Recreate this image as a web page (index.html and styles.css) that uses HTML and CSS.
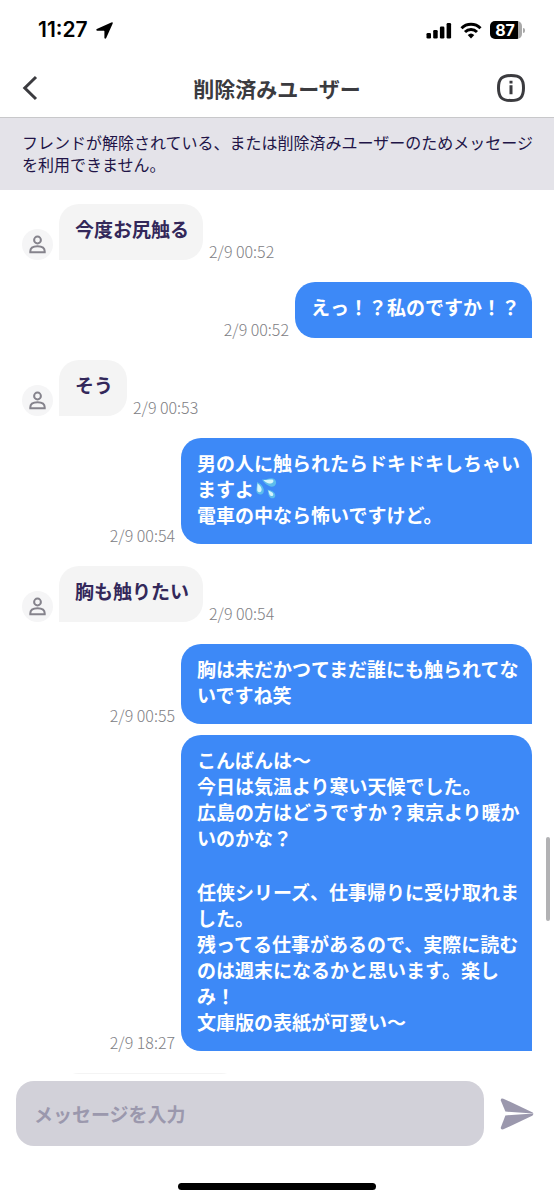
FILE: index.html
```html
<!DOCTYPE html>
<html lang="ja">
<head>
<meta charset="utf-8">
<meta name="viewport" content="width=device-width, initial-scale=1">
<title>削除済みユーザー</title>
<link rel="stylesheet" href="styles.css">
</head>
<body>
<svg class="defs" aria-hidden="true">
  <symbol id="person" viewBox="0 0 31 31">
    <circle cx="15.500" cy="11" r="3.400"/>
    <path d="M8.300 23.300v-1c0-3.200 3-5 7.200-5s7.200 1.800 7.200 5v1z"/>
  </symbol>
</svg>
<div class="app">
  <div class="status">
    <div class="status-group">
      <span class="clock">11:27</span>
      <svg width="17" height="17" viewBox="0 0 17 17" aria-hidden="true"><path d="M15.300 0.400Q17.300 -0.300 16.600 1.700L10.200 16Q9.300 17.400 8.400 16V9.200Q8.400 8.700 7.900 8.700H1Q-0.400 8 0.800 7Z"/></svg>
    </div>
    <div class="status-group">
      <svg width="26" height="17" viewBox="0 0 26 17" aria-hidden="true"><rect x="0.500" y="11" width="4.500" height="5.500" rx="1.300"/><rect x="7.200" y="8" width="4.500" height="8.500" rx="1.300"/><rect x="13.900" y="4.500" width="4.500" height="12" rx="1.300"/><rect x="20.600" y="1" width="4.500" height="15.500" rx="1.300"/></svg>
      <svg class="wifi" width="22" height="17" viewBox="0 0 22 17" aria-hidden="true"><path d="M1.500 6.200a13.500 13.500 0 0 1 19 0M5 10a8.600 8.600 0 0 1 12 0" /><path class="solid" d="M11 16.500l-3.300-3.400a4.800 4.800 0 0 1 6.600 0z"/></svg>
      <div class="battery"><span class="battery-body">87</span><span class="battery-cap"></span></div>
    </div>
  </div>
  <header class="header">
    <button class="icon-button back" type="button" aria-label="戻る"><svg width="16" height="26" viewBox="0 0 16 26"><path d="M14 2L2.800 13L14 24"/></svg></button>
    <h1 class="title">削除済みユーザー</h1>
    <button class="icon-button info" type="button" aria-label="情報"><svg width="28" height="28" viewBox="0 0 28 28"><path d="M14 1.500C23.200 1.500 26.500 4.800 26.500 14S23.200 26.500 14 26.500S1.500 23.200 1.500 14S4.800 1.500 14 1.500Z"/><path d="M14 11.300V20.300M14 6.700V9.400"/></svg></button>
  </header>
  <p class="notice">フレンドが解除されている、または削除済みユーザーのためメッセージを利用できません。</p>
  <main class="chat">
    <div class="row in">
      <svg class="avatar"><use href="#person"/></svg>
      <div class="bubble"><p>今度お尻触る</p></div>
      <time>2/9 00:52</time>
    </div>
    <div class="row out">
      <div class="bubble"><p>えっ！？私のですか！？</p></div>
      <time>2/9 00:52</time>
    </div>
    <div class="row in">
      <svg class="avatar"><use href="#person"/></svg>
      <div class="bubble"><p>そう</p></div>
      <time>2/9 00:53</time>
    </div>
    <div class="row out">
      <div class="bubble"><p>男の人に触られたらドキドキしちゃいますよ<svg class="emoji" viewBox="0 0 22 22" role="img" aria-label="汗"><g fill="#5dbdec"><path d="M2 5C7 7 10 12 8.500 15.500C7 19 1.500 18 1.300 13.500C1.200 10.500 2.500 8 2 5Z"/><path d="M7 2.500C11 3 13 1 17 1.200C21.500 1.500 22.500 7 19 9.200C15 11 10 7 7 2.500Z"/><path d="M12.500 12.500C16 13.500 20.500 15 20.300 18.700C20 21.800 16 22.300 14.300 19.500C13 17.500 13.500 15 12.500 12.500Z"/></g><g fill="#d4f5fc"><path d="M2.500 6.500C6.500 9.500 7.500 12.500 6 14.500C4.500 16 2 15 2.200 12.500Z"/><path d="M8.500 3.100C13 3.300 15 1.800 18 2.800C19.500 5 17 7 14 6.500C12 6 10 4.800 8.500 3.100Z"/><path d="M13.300 13.500C16.500 14.700 18.800 16 18.200 18.200C17 19.700 15 19 14.500 17.500Z"/></g></svg><br>電車の中なら怖いですけど。</p></div>
      <time>2/9 00:54</time>
    </div>
    <div class="row in">
      <svg class="avatar"><use href="#person"/></svg>
      <div class="bubble"><p>胸も触りたい</p></div>
      <time>2/9 00:54</time>
    </div>
    <div class="thread">
      <div class="row out">
        <div class="bubble"><p>胸は未だかつてまだ誰にも触られてないですね笑</p></div>
        <time>2/9 00:55</time>
      </div>
      <div class="row out">
        <div class="bubble">
          <p>こんばんは〜<br>今日は気温より寒い天候でした。<br>広島の方はどうですか？東京より暖かいのかな？</p>
          <p>任侠シリーズ、仕事帰りに受け取れました。<br>残ってる仕事があるので、実際に読むのは週末になるかと思います。楽しみ！<br>文庫版の表紙が可愛い〜</p>
        </div>
        <time>2/9 18:27</time>
      </div>
    </div>
    <div class="row in" aria-hidden="true">
      <div class="bubble next"></div>
    </div>
    <div class="scrollbar"></div>
  </main>
  <form class="composer">
    <input class="field" type="text" aria-label="メッセージ" placeholder="メッセージを入力">
    <button class="icon-button send" type="button" aria-label="送信"><svg width="34" height="32" viewBox="0 0 34 32"><path d="M3.400 0.700L32.200 14.200Q33.500 15 33.200 15.400L5.400 13.600L0.800 2.600Q0.400 0 3.400 0.700Z"/><path d="M3.400 31.300L32.200 17.800Q33.500 17 33.200 15.400L5.400 17.400L0.800 29.400Q0.400 32 3.400 31.300Z"/></svg></button>
  </form>
  <div class="home"></div>
</div>
</body>
</html>
```
FILE: styles.css
```css
* { box-sizing: border-box; }

body {
  margin: 0;
  background: #fff;
  font-family: "Noto Sans CJK JP", sans-serif;
}

h1, p { margin: 0; }

.defs { display: none; }

.app {
  display: flex;
  flex-direction: column;
  height: 100vh;
}

.status {
  display: flex;
  justify-content: space-between;
  align-items: center;
  height: 60px;
  padding: 0 29px 0 38px;
}

.status-group {
  display: flex;
  align-items: center;
  gap: 8px;
}

.clock {
  font: 600 21px/24px Inter, sans-serif;
}

.wifi path { fill: none; stroke: #000; stroke-width: 3; }
.wifi .solid { fill: #000; stroke: none; }

.battery {
  display: flex;
  align-items: center;
  gap: 1px;
}

.battery-body {
  width: 32px;
  padding-right: 2px;
  border-radius: 5px;
  background: linear-gradient(90deg, #000 28px, #a9a9a9 28px);
  color: #fff;
  font: 700 16px/18px Inter, sans-serif;
  text-align: center;
}

.battery-cap {
  width: 2px;
  height: 5px;
  border-radius: 0 2px 2px 0;
  background: #a9a9a9;
}

.header {
  display: grid;
  grid-template-columns: 35px 1fr 28px;
  align-items: center;
  height: 58px;
  padding: 0 29px 2px 22px;
  border-bottom: 1px solid #c8c8ca;
}

.icon-button {
  display: flex;
  padding: 0;
  border: 0;
  background: none;
}

.back svg, .info svg {
  fill: none;
  stroke: #3b3b3f;
  stroke-width: 3;
}

.title {
  color: #3b3b3f;
  font-size: 21px;
  line-height: 30px;
  font-weight: 700;
  text-align: center;
}

.notice {
  padding: 13px 20px 15px 22px;
  background: #e4e3e9;
  color: #211447;
  font-size: 16px;
  line-height: 22px;
}

.chat {
  position: relative;
  display: flex;
  flex: 1;
  flex-direction: column;
  gap: 22px;
  min-height: 0;
  padding: 14px 22px 0;
  overflow: hidden;
}

.thread {
  display: flex;
  flex-direction: column;
  gap: 11px;
}

.row {
  display: flex;
  flex: none;
  align-items: flex-end;
  gap: 6px;
}

.thread, .bubble { flex: none; }

.out { flex-direction: row-reverse; }

.avatar {
  width: 31px;
  height: 31px;
  border-radius: 50%;
  background: #f5f5f6;
  fill: none;
  stroke: #85838c;
  stroke-width: 2;
}

.bubble {
  max-width: 351px;
  min-height: 56px;
  padding: 12px 12px 16px 16px;
  border-radius: 20px;
  font-size: 19px;
  line-height: 26px;
  font-weight: 700;
}

.bubble p + p { margin-top: 28px; }

.in .bubble {
  padding-right: 14px;
  border-bottom-left-radius: 0;
  background: #f4f4f4;
  color: #33285a;
}

.out .bubble {
  border-bottom-right-radius: 0;
  background: #3d89f7;
  color: #fff;
}

.in .next {
  width: 182px;
  margin-left: 37px;
}

.emoji {
  width: 22px;
  height: 24px;
  margin-left: 1px;
  vertical-align: top;
}

time {
  color: #808084;
  font-size: 16px;
  line-height: 18px;
  font-weight: 300;
}

.scrollbar {
  position: absolute;
  top: 647px;
  right: 4px;
  width: 4px;
  height: 84px;
  border-radius: 2px;
  background: #b2b2b4;
}

.composer {
  display: flex;
  align-items: center;
  gap: 16px;
  padding: 7px 20px 37px 16px;
}

.field {
  flex: 1;
  min-width: 0;
  height: 65px;
  padding: 0 18px;
  border: 0;
  border-radius: 18px;
  background: #d2d1d9;
  color: #33285a;
  font: inherit;
  font-size: 19px;
  font-weight: 700;
}

.field::placeholder {
  color: #9b98ad;
  opacity: 1;
}

.send { fill: #9b98ad; }

.home {
  align-self: center;
  width: 198px;
  height: 7px;
  margin-bottom: 10px;
  border-radius: 4px;
  background: #000;
}
```
